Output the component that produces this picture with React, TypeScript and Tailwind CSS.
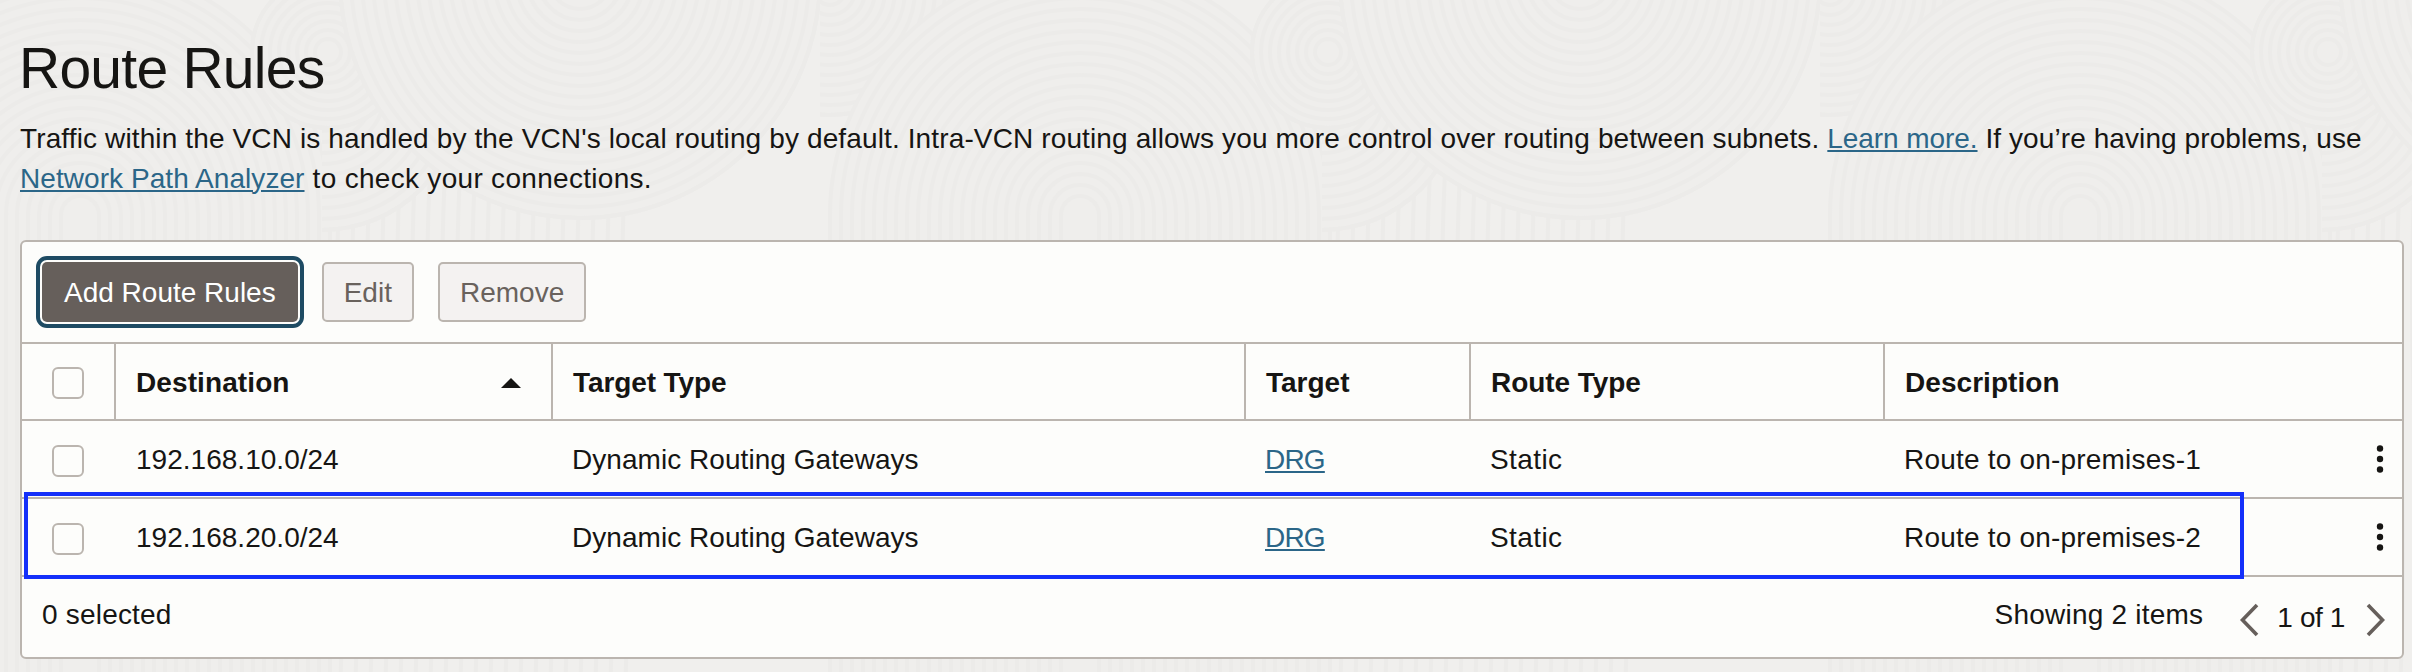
import { type ReactNode } from "react";

const COLUMNS = "grid grid-cols-[92px_437px_693px_225px_414px_519px]";

const range = (n: number) => Array.from({ length: n }, (_, i) => i);

function Rings({ cx, cy, r, step = 10 }: { cx: number; cy: number; r: number; step?: number }) {
  return (
    <g>
      <circle cx={cx} cy={cy} r={r} fill="#efeeec" />
      {range(Math.floor(r / step)).map((i) => (
        <circle key={i} cx={cx} cy={cy} r={r - i * step} />
      ))}
    </g>
  );
}

function RippleTile({ x }: { x: number }) {
  return (
    <g transform={`translate(${x} 0)`}>
      {range(20).map((i) => (
        <path key={i} d={`M${340 + i * 15} 170 q-6 130 0 260 t0 260`} />
      ))}
      {range(22).map((i) => {
        const r = 250 - i * 11;
        return <path key={i} d={`M${80 - r} 700 V215 A${r} ${r} 0 0 1 ${80 + r} 215 V700`} fill="#efeeec" />;
      })}
      <g clipPath="url(#rightHalf)">
        <Rings cx={322} cy={90} r={140} step={11} />
      </g>
      <Rings cx={328} cy={52} r={76} step={9} />
      <g clipPath="url(#rightHalf)">
        <Rings cx={580} cy={-22} r={240} step={11} />
      </g>
      <g clipPath="url(#farRight)">
        <Rings cx={830} cy={-10} r={125} step={10} />
      </g>
    </g>
  );
}

function Ripples() {
  return (
    <svg
      className="absolute inset-0 -z-10"
      width="2412"
      height="672"
      fill="none"
      stroke="#ecebe9"
      strokeWidth="4"
      aria-hidden="true"
    >
      <defs>
        <clipPath id="rightHalf">
          <rect x="322" y="0" width="600" height="700" />
        </clipPath>
        <clipPath id="farRight">
          <rect x="820" y="0" width="300" height="700" />
        </clipPath>
      </defs>
      <RippleTile x={-1000} />
      <RippleTile x={0} />
      <RippleTile x={1000} />
      <RippleTile x={2000} />
    </svg>
  );
}

function Link({ children, className = "" }: { children: ReactNode; className?: string }) {
  return (
    <a
      href="#"
      className={`text-[#2b6688] underline decoration-2 underline-offset-2 [text-decoration-skip-ink:auto] ${className}`}
    >
      {children}
    </a>
  );
}

function Checkbox({ label }: { label: string }) {
  return (
    <input
      type="checkbox"
      aria-label={label}
      className="block size-8 appearance-none rounded-[6px] border-2 border-[#bbb5af] bg-[#fdfdfb]"
    />
  );
}

function HeaderCell({ children, className = "" }: { children: ReactNode; className?: string }) {
  return (
    <div className={`flex items-center border-l-2 border-[#bbb5af] pt-[3px] pl-5 font-bold ${className}`}>
      {children}
    </div>
  );
}

function Row({ destination, description }: { destination: string; description: string }) {
  return (
    <div className={`${COLUMNS} h-[78px] border-b-2 border-[#bbb5af] leading-[78px]`}>
      <div className="pt-6 pl-[30px]">
        <Checkbox label={destination} />
      </div>
      <div className="pl-[22px] tracking-[0.02px]">{destination}</div>
      <div className="pl-[21px] tracking-[0.05px]">Dynamic Routing Gateways</div>
      <div className="pl-[21px]">
        <Link className="tracking-[-0.8px]">DRG</Link>
      </div>
      <div className="pl-[21px] tracking-[0.4px]">Static</div>
      <div className="flex h-[76px] items-center justify-between pr-[18px] pl-[21px]">
        <span className="pt-0.5 leading-10 tracking-[0.2px]">{description}</span>
        <svg width="8" height="28" viewBox="0 0 8 28" fill="#161513" aria-hidden="true">
          <circle cx="4" cy="3.5" r="3.2" />
          <circle cx="4" cy="14" r="3.2" />
          <circle cx="4" cy="24.5" r="3.2" />
        </svg>
      </div>
    </div>
  );
}

export default function App() {
  return (
    <main className="relative isolate h-[672px] w-[2412px] overflow-hidden bg-[#f0efed] pr-2 pl-5 font-['Liberation_Sans',Arial,sans-serif] text-[28px] leading-10 text-[#161513]">
      <Ripples />
      <h1 className="-ml-px pt-8 text-[57px] leading-[72px] tracking-[-0.75px]">Route Rules</h1>
      <p className="h-[122px] pt-[15px] whitespace-nowrap">
        <span className="tracking-[0.127px]">
          Traffic within the VCN is handled by the VCN's local routing by default. Intra-VCN routing allows you more
          control over routing between subnets.{" "}
        </span>
        <Link className="tracking-[-0.07px]">Learn more.</Link>
        <span className="tracking-[0.09px]"> If you’re having problems, use</span>
        <br />
        <Link className="tracking-[0.06px]">Network Path Analyzer</Link>
        <span className="tracking-[0.3px]"> to check your connections.</span>
      </p>

      <section className="mt-[14px] mb-3 h-[419px] rounded-[6px] border-2 border-[#bbb5af] bg-[#fdfdfb]">
        <div className="flex h-[102px] gap-6 border-b-2 border-[#bbb5af] pt-5 pl-5">
          <button className="h-[60px] rounded-[5px] bg-[#665f5b] px-[22px] pt-0.5 text-white outline-4 outline-offset-2 outline-[#1e4b63]">
            Add Route Rules
          </button>
          <button className="h-[60px] rounded-[5px] border-2 border-[#bbb5af] bg-[#f4f2f1] px-5 pt-0.5 text-[#69625d]">
            Edit
          </button>
          <button className="h-[60px] rounded-[5px] border-2 border-[#bbb5af] bg-[#f4f2f1] px-5 pt-0.5 text-[#69625d]">
            Remove
          </button>
        </div>

        <div className={`${COLUMNS} h-[77px] border-b-2 border-[#bbb5af]`}>
          <div className="pt-[23px] pl-[30px]">
            <Checkbox label="Select all" />
          </div>
          <HeaderCell className="justify-between pr-[30px] tracking-[0.1px]">
            Destination
            <svg className="mb-px" width="20" height="10" viewBox="0 0 20 10" aria-hidden="true">
              <path d="M0 10 10 0l10 10Z" fill="#161513" />
            </svg>
          </HeaderCell>
          <HeaderCell className="tracking-[-0.1px]">Target Type</HeaderCell>
          <HeaderCell>Target</HeaderCell>
          <HeaderCell className="tracking-[-0.05px]">Route Type</HeaderCell>
          <HeaderCell className="tracking-[0.05px]">Description</HeaderCell>
        </div>

        <Row destination="192.168.10.0/24" description="Route to on-premises-1" />
        <div className="relative">
          <Row destination="192.168.20.0/24" description="Route to on-premises-2" />
          <div className="absolute -top-[7px] left-[2px] h-[87px] w-[2220px] border-4 border-[#1430fa]" />
        </div>

        <div className="flex h-20 items-center pr-[16px] pl-5">
          <span className="pb-[5px] tracking-[0.2px]">0 selected</span>
          <span className="mr-[36px] ml-auto pb-[5px] tracking-[0.22px]">Showing 2 items</span>
          <svg className="mt-[6px]" width="20" height="34" viewBox="0 0 20 34" fill="none" stroke="#665f5b" strokeWidth="3.6" aria-hidden="true">
            <path d="M18 2 3.5 17 18 32" />
          </svg>
          <span className="mr-[21px] ml-[18px] pt-0.5 tracking-[-0.4px]">1 of 1</span>
          <svg className="mt-[6px]" width="20" height="34" viewBox="0 0 20 34" fill="none" stroke="#665f5b" strokeWidth="3.6" aria-hidden="true">
            <path d="M2 2 16.5 17 2 32" />
          </svg>
        </div>
      </section>
    </main>
  );
}
